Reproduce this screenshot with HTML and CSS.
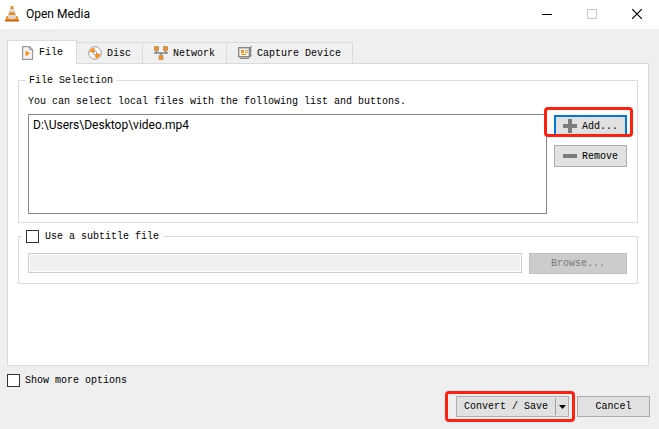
FILE: index.html
```html
<!DOCTYPE html>
<html lang="en">
<head>
<meta charset="utf-8">
<title>Open Media</title>
<link rel="stylesheet" href="styles.css">
</head>
<body>
<header class="titlebar">
  <svg class="cone" viewBox="0 0 14 16" aria-hidden="true">
    <path d="M1.500 10h11l1.500 5H0z" fill="#f08a1d"/>
    <path d="M0 14h14v1.500H0z" fill="#c8600c"/>
    <path d="M6 0h2l3.500 12q-4.500 2-9 0z" fill="#f08a1d"/>
    <path d="M5.200 3h3.600l1 3.300H4.200z" fill="#d5dade"/>
    <path d="M3.400 9h7.200l.9 3q-4.500 2-9 0z" fill="#d5dade"/>
  </svg>
  <h1 class="title">Open Media</h1>
  <div class="window-controls">
    <button class="window-button" aria-label="Minimize"><svg viewBox="0 0 10 10"><path d="M0 5.500h10" stroke="#000"/></svg></button>
    <button class="window-button" aria-label="Maximize" disabled><svg viewBox="0 0 10 10"><path d="M.5.5h9v9h-9z" fill="none" stroke="#c8c8c8"/></svg></button>
    <button class="window-button" aria-label="Close"><svg viewBox="0 0 10 10"><path d="M0 0l10 10M10 0L0 10" stroke="#000" stroke-width="1.200"/></svg></button>
  </div>
</header>
<main class="dialog">
  <div class="tabs" role="tablist">
    <button class="tab tab-active" role="tab" aria-selected="true">
      <svg class="icon" viewBox="0 0 14 14" aria-hidden="true"><path d="M1.600.7h6.900l3 3v9.600H1.600z" fill="#f6f6f6" stroke="#999" stroke-width="1.200"/><path d="M8.500.7v3h3" fill="none" stroke="#999"/><path d="M4.500 4.500v6L9 7.500z" fill="#ff8c0a"/></svg>File</button>
    <button class="tab" role="tab" aria-selected="false">
      <svg class="icon" viewBox="0 0 14 14" aria-hidden="true"><circle cx="7" cy="7" r="6.300" fill="#fff" stroke="#999"/><path d="M7 7L1.800 6A5.300 5.300 0 0 1 6.500 1.700zM7 7l5.200 1a5.300 5.300 0 0 1-4.700 4.300z" fill="#ff8c0a"/><circle cx="7" cy="7" r="1.800" fill="#fff" stroke="#999"/></svg>Disc</button>
    <button class="tab" role="tab" aria-selected="false">
      <svg class="icon" viewBox="0 0 14 14" aria-hidden="true"><path d="M0 7h14M2.500 5v2M11.500 5v2M7 7v3" fill="none" stroke="#808080" stroke-width="1.600"/><path d="M.5.5h4v4h-4zM9.500.5h4v4h-4zM5 9.500h4v4H5z" fill="#ff8c0a" stroke="#b99a70"/></svg>Network</button>
    <button class="tab" role="tab" aria-selected="false">
      <svg class="icon" viewBox="0 0 14 14" aria-hidden="true"><path d="M.7 1.700h10.600v9H.7z" fill="#fff" stroke="#888" stroke-width="1.400"/><path d="M11.500 2L14 .5M12.500 2v9M12 4h2M12 9h2M2 12.300h9" fill="none" stroke="#888" stroke-width="1.200"/><path d="M3 4h3v3H3zM7 4h3v1H7zM7 6h3v1H7zM3 8h5v1H3z" fill="#ff8c0a"/></svg>Capture Device</button>
  </div>
  <section class="pane" role="tabpanel">
    <fieldset class="group">
      <legend class="legend">File Selection</legend>
      <p class="hint">You can select local files with the following list and buttons.</p>
      <div class="file-row">
        <ul class="file-list"><li>D:\Users\Desktop\video.mp4</li></ul>
        <div class="file-actions">
          <div class="marked marked-add"><button class="button button-default">
            <svg class="icon" viewBox="0 0 14 14" aria-hidden="true"><path d="M5 0h4v5h5v4H9v5H5V9H0V5h5z" fill="#7c7c7c"/></svg>Add...</button></div>
          <button class="button">
            <svg class="icon" viewBox="0 0 14 14" aria-hidden="true"><path d="M0 5h14v4H0z" fill="#7c7c7c"/></svg>Remove</button>
        </div>
      </div>
    </fieldset>
    <fieldset class="group group-subtitle">
      <legend class="legend legend-check"><label class="check"><input type="checkbox" class="box">Use a subtitle file</label></legend>
      <div class="subtitle-row">
        <input class="path" type="text" aria-label="Subtitle file" disabled>
        <button class="button button-browse" disabled>Browse...</button>
      </div>
    </fieldset>
  </section>
  <label class="check check-more"><input type="checkbox" class="box">Show more options</label>
  <footer class="footer">
    <div class="marked marked-save"><div class="split">
      <button class="split-main">Convert / Save</button>
      <button class="split-arrow" aria-label="More actions"><svg viewBox="0 0 7 4"><path d="M0 0h7L3.500 4z"/></svg></button>
    </div></div>
    <button class="button">Cancel</button>
  </footer>
</main>
</body>
</html>
```
FILE: styles.css
```css
* { box-sizing: border-box; }

body {
  margin: 0;
  min-height: 100vh;
  display: flex;
  flex-direction: column;
  background: #efefef;
  color: #000;
  font: 10px/13px "Liberation Mono", monospace;
}

button, input { font: inherit; color: inherit; margin: 0; }
svg { display: block; flex: none; }

.titlebar {
  display: flex;
  align-items: center;
  height: 29px;
  padding: 0 0 2px 5px;
  background: #fff;
  font-family: Roboto, sans-serif;
}
.cone { width: 14px; height: 16px; }
.title { flex: 1; margin: 0 0 0 7px; font-size: 12px; line-height: 16px; font-weight: 400; }
.window-controls { display: flex; }
.window-button {
  display: flex;
  align-items: center;
  justify-content: center;
  width: 45px;
  height: 26px;
  padding: 0;
  border: 0;
  background: none;
}
.window-button svg { width: 10px; height: 10px; }

.dialog {
  flex: 1;
  display: flex;
  flex-direction: column;
  padding: 11px 9px 12px 7px;
}

.tabs { display: flex; align-items: flex-end; }
.tab {
  display: flex;
  align-items: center;
  gap: 5px;
  height: 21px;
  padding: 0 11px;
  border: 1px solid #dadada;
  border-width: 1px 1px 0 0;
  background: #f0f0f0;
}
.tab-active {
  position: relative;
  height: 24px;
  gap: 4px;
  padding: 0 13px;
  margin-bottom: -1px;
  border-left-width: 1px;
  background: #fff;
}
.icon { width: 14px; height: 14px; }

.pane {
  flex: 1;
  margin-right: 1px;
  padding: 10px;
  border: 1px solid #dadada;
  background: #fff;
}

.group {
  min-width: 0;
  margin: 0 0 7px;
  padding: 8px 10px 8px 9px;
  border: 1px solid #dcdcdc;
}
.group-subtitle { padding: 10px 10px 9px 9px; }
.legend { margin-left: -2px; padding: 0 3px; }
.legend-check { margin-left: -6px; padding: 0 4px; }
.hint { margin: 0 0 5px; line-height: 14px; }

.file-row { display: flex; gap: 7px; }
.file-list {
  flex: 1;
  height: 100px;
  margin: 0;
  padding: 2px 4px;
  border: 1px solid #828790;
  list-style: none;
  font: 12px/16px Roboto, sans-serif;
}
.file-actions { display: flex; flex-direction: column; gap: 8px; width: 73px; padding-top: 1px; }

.button {
  display: flex;
  align-items: center;
  justify-content: center;
  gap: 5px;
  width: 73px;
  height: 22px;
  padding: 0;
  border: 1px solid #adadad;
  background: #e1e1e1;
}
.button-default { border: 2px solid #0078d7; }

.marked { position: relative; }
.marked::after {
  content: "";
  position: absolute;
  border: 3px solid #ff2010;
  border-radius: 4px;
  pointer-events: none;
}
.marked-add::after { inset: -8px -6px 0 -10px; }
.marked-save::after { inset: -5px -6px -5px -11px; }

.check { display: flex; align-items: center; gap: 6px; }
.box {
  appearance: none;
  width: 13px;
  height: 13px;
  border: 1px solid #333;
  background: #fff;
}
.check-more { margin-top: 8px; gap: 5px; align-self: flex-start; }

.subtitle-row { display: flex; gap: 7px; }
.path {
  flex: 1;
  min-width: 0;
  height: 20px;
  padding: 0;
  border: 1px solid #ccc;
  background: #efefef;
  box-shadow: inset 0 0 0 1px #fff;
}
.button-browse {
  width: 98px;
  height: 21px;
  border-color: #bfbfbf;
  background: #ccc;
  color: #787878;
}

.footer { display: flex; justify-content: flex-end; gap: 8px; margin-top: 9px; }
.footer .button { height: 21px; }
.split { display: flex; width: 113px; height: 21px; border: 1px solid #adadad; background: #e1e1e1; }
.split-main { flex: 1; padding: 0; border: 0; background: none; }
.split-arrow {
  display: flex;
  align-items: center;
  justify-content: center;
  width: 13px;
  height: 17px;
  margin-top: 1px;
  padding: 0;
  border: 0;
  border-left: 1px solid #a0a0a0;
  background: none;
}
.split-arrow svg { width: 7px; height: 4px; }
```
